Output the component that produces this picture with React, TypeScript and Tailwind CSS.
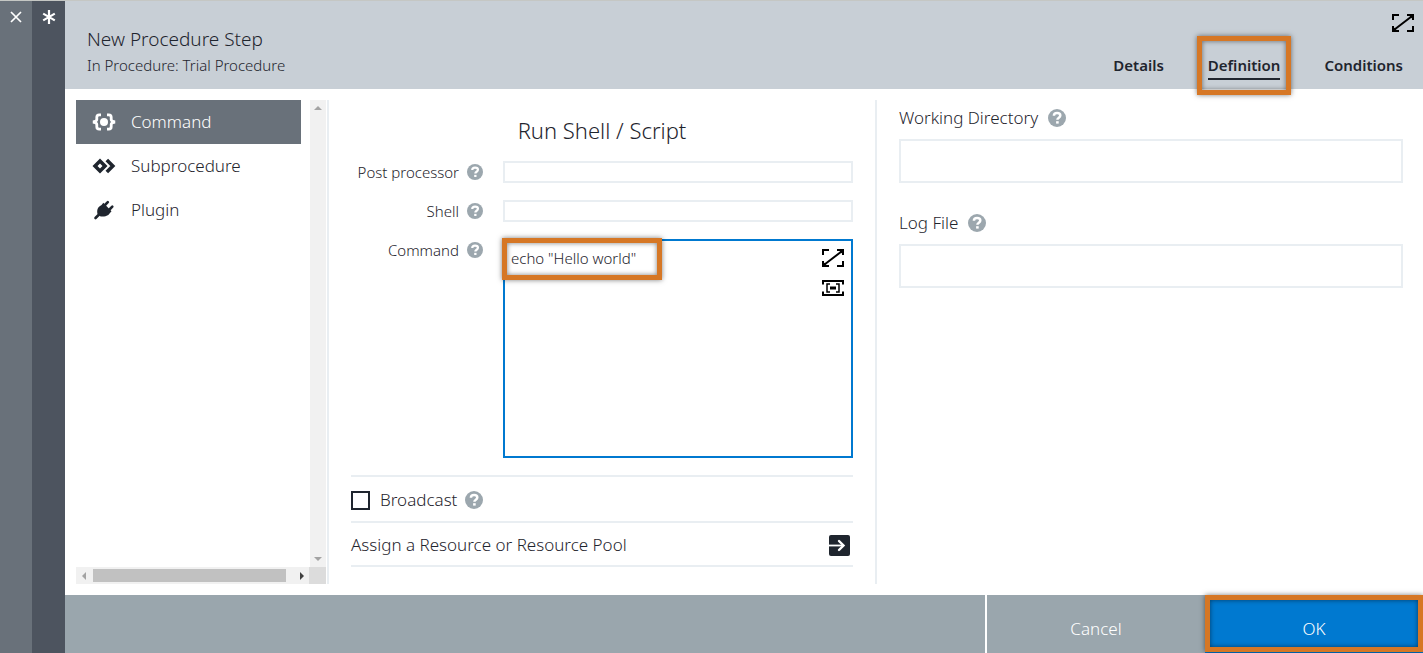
import React, { useState } from "react";

function HelpIcon({ className }: { className: string }) {
  return (
    <svg viewBox="0 0 18 18" className={className} aria-hidden="true">
      <circle cx="9" cy="9" r="9" fill="#9ca7ae" />
      <path
        d="M5.900 6.800C5.900 4.900 7.300 4.100 9.100 4.100c1.900 0 3.200 1 3.200 2.500 0 2.300-2.900 2-2.900 4.200"
        fill="none"
        stroke="#fff"
        strokeWidth="2.500"
      />
      <rect x="8.100" y="12.200" width="2.600" height="2.400" fill="#fff" />
    </svg>
  );
}

function ExpandIcon() {
  return (
    <svg viewBox="0 0 22 18" className="h-[18px] w-[22px]" fill="none" stroke="#000" strokeWidth="2" aria-hidden="true">
      <path d="M1 6V1h6M15 17h6v-5M2.5 15.5l17-13" />
      <path d="M15 1h6v5M1 12v5h6" />
      <path d="M16.5 1H21v4.5zM1 12.5V17h4.5z" fill="#000" stroke="none" />
    </svg>
  );
}

function FitIcon() {
  return (
    <svg viewBox="0 0 22 18" className="h-[18px] w-[22px]" fill="none" stroke="#000" aria-hidden="true">
      <path d="M1 5.500V2h20v3.500M1 12.500V16h20v-3.500" strokeWidth="2" />
      <path d="M8 5H5v8h3M14 5h3v8h-3" strokeWidth="1.500" />
      <rect x="8" y="7.500" width="6" height="3" fill="#000" stroke="none" />
    </svg>
  );
}

function CommandIcon() {
  return (
    <svg viewBox="0 0 24 18" className="h-[18px] w-6" fill="none" stroke="currentColor" strokeWidth="2.8" aria-hidden="true">
      <path d="M9 1.900H7.200Q4.800 1.900 4.800 4.300V6.500Q4.800 8.300 1 9q3.800.7 3.800 2.500v2.200q0 2.400 2.400 2.400H9" />
      <path d="M15 1.900h1.800q2.400 0 2.400 2.400v2.200q0 1.800 3.800 2.500-3.800.7-3.800 2.500v2.200q0 2.400-2.400 2.400H15" />
      <circle cx="12" cy="9" r="4" fill="currentColor" stroke="none" />
    </svg>
  );
}

function SubprocedureIcon() {
  return (
    <svg viewBox="0 0 24 18" className="h-[18px] w-6" aria-hidden="true">
      <path d="M0.500 9 8 1.500 15.500 9 8 16.500zM5.500 9 8 11.500 10.500 9 8 6.500z" fill="currentColor" fillRule="evenodd" />
      <path d="m14.800 3 6 6-6 6" fill="none" stroke="currentColor" strokeWidth="3.600" />
    </svg>
  );
}

function PluginIcon() {
  return (
    <svg viewBox="0 0 24 20" className="h-5 w-6" aria-hidden="true">
      <path
        d="M3.500 18 7 14.500M13 5 15.800 2.200M17.500 9.500 20.300 6.700"
        fill="none"
        stroke="currentColor"
        strokeWidth="2.600"
        strokeLinecap="round"
      />
      <path d="M11.300 2.800 19.500 11.200 18.200 12.700Q16.500 15.800 13.500 16.200q-3 .7-5.500 0L5.300 13.500Q4.500 8.300 8 6q1.500-1 2-1.500z" fill="currentColor" />
    </svg>
  );
}

function ArrowBoxIcon() {
  return (
    <svg viewBox="0 0 21 21" className="size-[21px]" aria-hidden="true">
      <rect width="21" height="21" rx="2" fill="#1f252e" />
      <path d="M0 10.500h13" stroke="#fff" strokeWidth="1.800" />
      <path d="m10 6 4.500 4.500L10 15" fill="none" stroke="#fff" strokeWidth="2.400" strokeLinecap="round" />
    </svg>
  );
}

function Highlight({ className }: { className: string }) {
  return (
    <span
      aria-hidden="true"
      className={`pointer-events-none absolute border-5 border-[#d67725] shadow-[0_0_5px_rgba(0,0,0,0.5),inset_0_0_5px_rgba(0,0,0,0.5)] ${className}`}
    />
  );
}

function Arrow({ d, dark = false }: { d: string; dark?: boolean }) {
  return (
    <svg viewBox="0 0 8 8" className="size-2" aria-hidden="true">
      <path d={d} fill={dark ? "#404040" : "#a3a3a3"} />
    </svg>
  );
}

const steps = [
  { name: "Command", icon: <CommandIcon /> },
  { name: "Subprocedure", icon: <SubprocedureIcon /> },
  { name: "Plugin", icon: <PluginIcon /> },
];

function Sidebar() {
  const [active, setActive] = useState("Command");
  return (
    <div className="flex w-[253px] shrink-0 flex-col border-r-2 border-[#e9eef2] pr-px">
      <div className="flex flex-1">
        <nav className="flex-1 pr-[9px]">
          {steps.map((s) => (
            <button
              key={s.name}
              type="button"
              onClick={() => setActive(s.name)}
              className={`flex h-11 w-full items-center gap-[15px] pl-4 text-left text-[17px] ${
                active === s.name ? "bg-[#69717a] text-white" : "text-[#1f252e]"
              }`}
            >
              {s.icon}
              {s.name}
            </button>
          ))}
        </nav>
        <div className="flex w-4 flex-col items-center justify-between bg-[#f1f1f1] py-1">
          <Arrow d="M0 6 4 2 8 6z" />
          <Arrow d="M0 2 4 6 8 2z" />
        </div>
      </div>
      <div className="flex h-[17px]">
        <div className="flex flex-1 items-center bg-[#f1f1f1] pl-1">
          <Arrow d="M6 0 2 4 6 8z" />
          <div className="mr-3 ml-[5px] h-[13px] flex-1 bg-[#c1c1c1]" />
          <div className="pr-[3px]">
            <Arrow d="M2 0 6 4 2 8z" dark />
          </div>
        </div>
        <div className="w-[17px] bg-[#dcdcdc]" />
      </div>
    </div>
  );
}

function RowLabel({ id, text }: { id: string; text: string }) {
  return (
    <div className="flex h-[22px] items-center justify-end gap-2 text-[15px]">
      <label htmlFor={id}>{text}</label>
      <HelpIcon className="size-4" />
    </div>
  );
}

function CommandForm() {
  return (
    <section className="flex w-[548px] shrink-0 flex-col border-r-2 border-[#e9eef2] px-[22px]">
      <h2 className="flex h-[61px] items-center justify-center text-[22px]">Run Shell / Script</h2>
      <div className="grid grid-cols-[132px_1fr] gap-x-5 gap-y-[17px]">
        <RowLabel id="post" text="Post processor" />
        <input id="post" className="h-[22px] border-2 border-[#e9eef2] px-2 text-[15px] outline-none" />
        <RowLabel id="shell" text="Shell" />
        <input id="shell" className="h-[22px] border-2 border-[#e9eef2] px-2 text-[15px] outline-none" />
        <RowLabel id="command" text="Command" />
        <div className="relative flex h-[219px] border-2 border-[#0079d0]">
          <textarea
            id="command"
            spellCheck={false}
            className="flex-1 resize-none px-1.5 py-1.5 text-[15px] outline-none"
            defaultValue={'echo "Hello world"'}
          />
          <div className="flex flex-col gap-3 px-[7px] py-2">
            <button type="button" aria-label="Expand editor">
              <ExpandIcon />
            </button>
            <button type="button" aria-label="Fit editor">
              <FitIcon />
            </button>
          </div>
          <Highlight className="-top-[3px] -left-[3px] h-[42px] w-40" />
        </div>
      </div>
      <div className="mt-[17px] flex h-[46px] items-center border-t-2 border-[#e9eef2] pt-0.5 text-[17px]">
        <input
          id="broadcast"
          type="checkbox"
          className="mr-2.5 size-[19px] appearance-none border-2 border-[#1f252e] bg-white checked:bg-[#1f252e]"
        />
        <label htmlFor="broadcast" className="mr-2">
          Broadcast
        </label>
        <HelpIcon className="size-[18px]" />
      </div>
      <button
        type="button"
        className="flex h-[46px] items-center justify-between border-y-2 border-[#e9eef2] pt-0.5 pr-[3px] text-left text-[17px]"
      >
        Assign a Resource or Resource Pool
        <ArrowBoxIcon />
      </button>
    </section>
  );
}

function PathField({ id, label }: { id: string; label: string }) {
  return (
    <div>
      <div className="flex h-[39px] items-center gap-2.5 pb-[3px] text-[17px]">
        <label htmlFor={id}>{label}</label>
        <HelpIcon className="size-[18px]" />
      </div>
      <input id={id} className="h-11 w-full border-2 border-[#e9eef2] px-2 outline-none" />
    </div>
  );
}

export default function App() {
  return (
    <div className="flex min-h-screen flex-col border-t border-[#c5c7c4] bg-white font-['Noto_Sans',sans-serif] font-light text-[#1f252e]">
      <div className="flex flex-1">
        <div className="flex w-8 shrink-0 justify-center bg-[#69717a] pt-2.5">
          <button type="button" aria-label="Close" className="size-3">
            <svg viewBox="0 0 12 12" fill="none" stroke="#fff" strokeWidth="1.700">
              <path d="m1 1 10 10M11 1 1 11" />
            </svg>
          </button>
        </div>
        <div className="flex w-[33px] shrink-0 justify-center bg-[#4d545f] pt-[9px]">
          <svg viewBox="0 0 14 14" className="size-3.5" fill="none" stroke="#fff" strokeWidth="2.200" aria-hidden="true">
            <path d="M7 0v14M1.200 3.600l11.600 6.800M12.800 3.600 1.200 10.400" />
          </svg>
        </div>
        <main className="flex min-w-0 flex-1 flex-col">
          <header className="flex h-[88px] justify-between bg-[#c8cfd6] pr-[9px] pl-[22px]">
            <div className="pt-6">
              <h1 className="text-[19px] leading-7">New Procedure Step</h1>
              <p className="text-[15px] leading-6">In Procedure: Trial Procedure</p>
            </div>
            <div className="flex flex-col items-end justify-between pt-[13px] pb-[9px]">
              <button type="button" aria-label="Full screen">
                <ExpandIcon />
              </button>
              <nav className="mr-[11px] flex gap-11 text-[15px] leading-[26px] font-semibold">
                <a href="#details">Details</a>
                <a href="#definition" className="relative border-b-2 border-[#1f252e]">
                  Definition
                  <Highlight className="-inset-x-[11px] -top-4 -bottom-[17px]" />
                </a>
                <a href="#conditions">Conditions</a>
              </nav>
            </div>
          </header>
          <div className="flex flex-1 py-[11px] pl-[11px]">
            <Sidebar />
            <CommandForm />
            <section className="flex min-w-0 flex-1 flex-col gap-[22px] pr-5 pl-[22px]">
              <PathField id="workdir" label="Working Directory" />
              <PathField id="logfile" label="Log File" />
            </section>
          </div>
          <footer className="flex h-[58px] justify-end bg-[#9aa6ad] text-[17px] text-white">
            <button type="button" className="w-[220px] border-l-2 border-white pt-2.5">
              Cancel
            </button>
            <button type="button" className="relative w-[218px] bg-[#0079d0] pt-2.5">
              OK
              <Highlight className="inset-x-0 top-0 bottom-px" />
            </button>
          </footer>
        </main>
      </div>
    </div>
  );
}
